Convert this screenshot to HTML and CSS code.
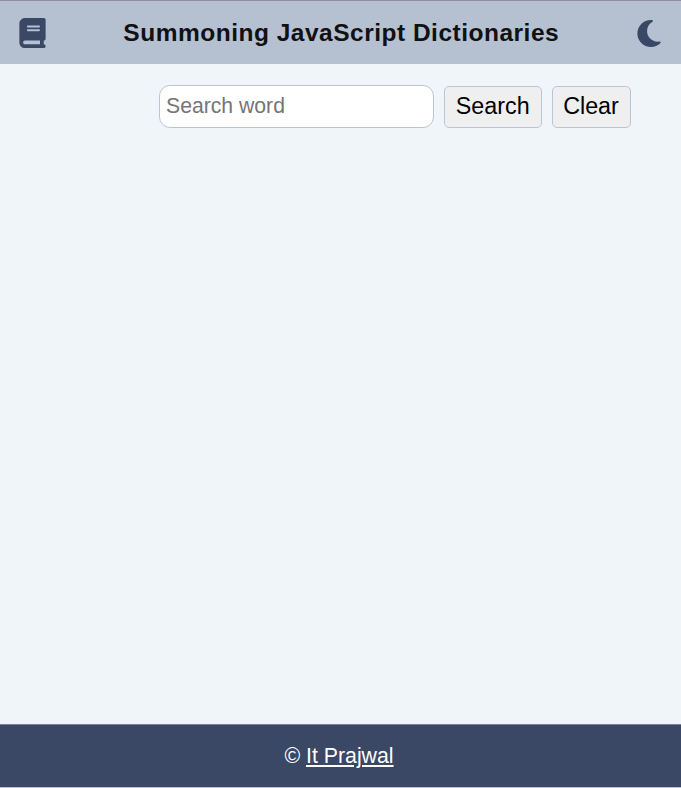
FILE: index.html
```html
<!DOCTYPE html>
<html lang="en">
<head>
<meta charset="utf-8">
<title>Summoning JavaScript Dictionaries</title>
<link rel="stylesheet" href="styles.css">
</head>
<body>
<header class="header">
  <svg class="book" viewBox="0 0 448 512" aria-hidden="true"><path d="M96 0C43 0 0 43 0 96V416c0 53 43 96 96 96H384h32c17.700 0 32-14.300 32-32s-14.300-32-32-32V384c17.700 0 32-14.300 32-32V32c0-17.700-14.300-32-32-32H384 96zm0 384H352v64H96c-17.700 0-32-14.300-32-32s14.300-32 32-32zm32-240c0-8.800 7.200-16 16-16H336c8.800 0 16 7.200 16 16s-7.200 16-16 16H144c-8.800 0-16-7.200-16-16zm16 48H336c8.800 0 16 7.200 16 16s-7.200 16-16 16H144c-8.800 0-16-7.200-16-16s7.200-16 16-16z"/></svg>
  <h1 class="title">Summoning JavaScript Dictionaries</h1>
  <svg class="moon" viewBox="0 0 384 512" aria-hidden="true"><path d="M223.500 32C100 32 0 132.300 0 256S100 480 223.500 480c60.600 0 115.500-24.200 155.800-63.400c5-4.900 6.300-12.500 3.100-18.700s-10.100-9.700-17-8.500c-9.800 1.700-19.800 2.600-30.100 2.600c-96.900 0-175.500-78.800-175.500-176c0-65.800 36-123.100 89.300-153.300c6.100-3.500 9.200-10.500 7.700-17.300s-7.300-11.900-14.300-12.500c-6.300-.5-12.600-.8-19-.8z"/></svg>
</header>
<main class="main">
  <form class="search">
    <input class="field" type="text" placeholder="Search word">
    <button class="button" type="button">Search</button>
    <button class="button clear" type="button">Clear</button>
  </form>
</main>
<footer class="footer"><p class="credit">© <a class="link" href="#">It Prajwal</a></p></footer>
</body>
</html>
```
FILE: styles.css
```css
* { box-sizing: border-box; }
body {
  margin: 0;
  height: 788px;
  display: flex;
  flex-direction: column;
  overflow: hidden;
  background: #f0f5f9;
  font-family: "Liberation Sans", Arial, sans-serif;
  border-bottom: 1px solid #b5c0d0;
}
.header {
  height: 64px;
  flex: none;
  display: flex;
  align-items: center;
  justify-content: space-between;
  padding: 1px 20.500px 0 19px;
  border-top: 1px solid #8d9299;
  background: #b5c0d1;
}
.book, .moon { display: block; fill: #3a4866; }
.book { width: 27px; height: 30px; }
.moon { width: 24px; height: 31px; }
.title {
  margin: 0 0 1px;
  font-size: 24.500px;
  line-height: 30px;
  letter-spacing: 0.500px;
  color: #111;
  white-space: nowrap;
}
.main { flex: 1; }
.search {
  display: flex;
  align-items: flex-end;
  margin: 21px 0 0 159px;
}
.field {
  width: 275px;
  height: 43px;
  padding: 0 6px 1px;
  border: 1px solid #b9c5d7;
  border-radius: 11px;
  background: #fff;
  font: 21.200px "Liberation Sans", Arial, sans-serif;
}
.field::placeholder { color: #757575; }
.button {
  width: 97.500px;
  height: 42px;
  margin-left: 10px;
  padding: 0 0 1px;
  border: 1px solid #b9c5d7;
  border-radius: 5px;
  background: #efefef;
  color: #000;
  font: 23.300px "Liberation Sans", Arial, sans-serif;
}
.clear { width: 79px; }
.footer {
  height: 63px;
  flex: none;
  border-top: 1px solid #76839a;
  background: #3a4866;
  display: flex;
  align-items: center;
  justify-content: center;
}
.credit { margin: 0 3px 0 0; font-size: 21.300px; line-height: 24px; color: #fff; }
.link { color: #fff; }
```
